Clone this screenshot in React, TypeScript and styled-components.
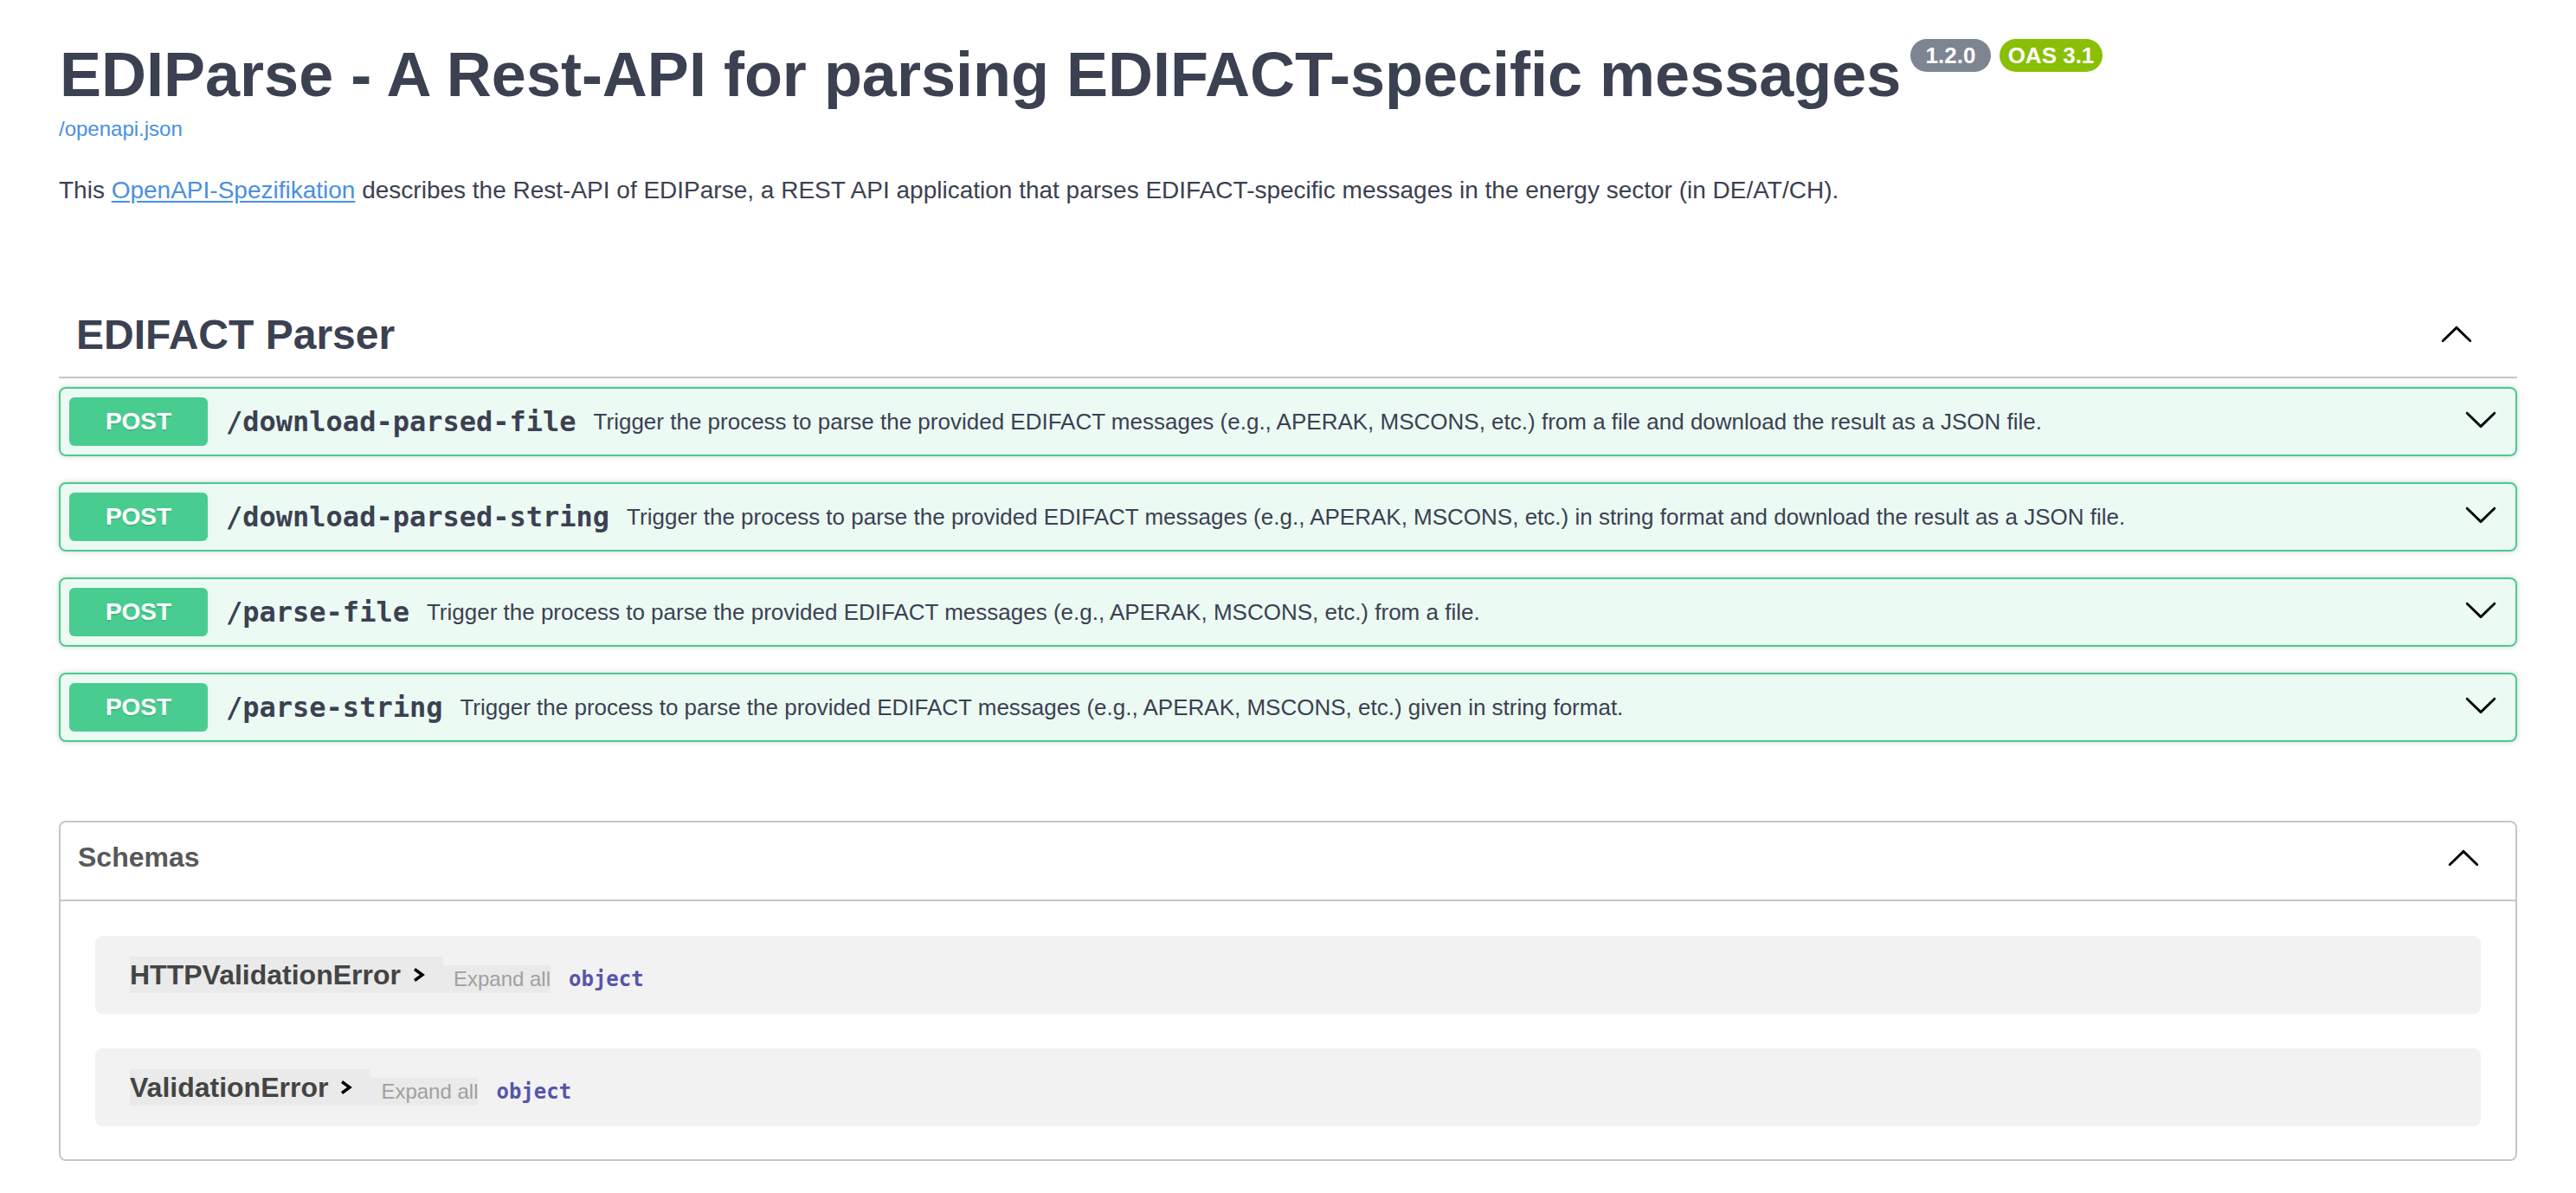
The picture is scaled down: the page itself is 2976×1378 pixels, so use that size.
import React from "react";
import styled, { createGlobalStyle } from "styled-components";

const GlobalStyle = createGlobalStyle`
  * { box-sizing: border-box; }
  body {
    margin: 0;
    background: #ffffff;
    font-family: "Liberation Sans", Arial, sans-serif;
    color: #3b4151;
  }
`;

const Wrapper = styled.div`
  max-width: 2920px;
  margin: 0 auto;
  padding: 45px 40px 36px;
`;

const Info = styled.header`
  margin-bottom: 97px;
`;

const Title = styled.h2`
  display: flex;
  align-items: flex-start;
  margin: 0;
  font-size: 72px;
  line-height: 82px;
  font-weight: 700;
  color: #3b4151;
`;

const TitleText = styled.span`
  padding-left: 1px;
`;

const Badges = styled.span`
  display: flex;
  gap: 10px;
  margin-left: 11px;
`;

const Badge = styled.span<{ $bg: string }>`
  display: inline-block;
  height: 38px;
  padding: 0 10px;
  border-radius: 100px;
  background: ${(p) => p.$bg};
  color: #ffffff;
  font-size: 26px;
  line-height: 39px;
  font-weight: 700;
  white-space: pre;
`;

const SpecLink = styled.a`
  display: block;
  margin-top: 8px;
  font-size: 24px;
  line-height: 28px;
  color: #4990e2;
  text-decoration: none;
`;

const Description = styled.p`
  margin: 36px 0 0;
  font-size: 28px;
  line-height: 42px;
  color: #3b4151;
`;

const DescLink = styled.a`
  color: #4990e2;
  text-decoration: underline;
  text-underline-offset: 3px;
`;

const TagSection = styled.section`
  display: flex;
  flex-direction: column;
`;

const TagHeader = styled.h3`
  display: flex;
  align-items: center;
  margin: 0 0 10px;
  padding: 20px 40px 20px 20px;
  border-bottom: 2px solid rgba(59, 65, 81, 0.3);
  font-size: 48px;
  font-weight: 700;
  color: #3b4151;
`;

const TagTitle = styled.span`
  flex: 1;
  line-height: 57px;
`;

const IconButton = styled.span<{ $pad?: string }>`
  display: flex;
  padding: ${(p) => p.$pad || "0"};
  color: #000000;
`;

const OpList = styled.div`
  display: flex;
  flex-direction: column;
  gap: 30px;
`;

const OpBlock = styled.div`
  display: flex;
  align-items: center;
  padding: 10px;
  border: 2px solid #49cc90;
  border-radius: 8px;
  background: rgba(73, 204, 144, 0.1);
  box-shadow: 0 0 6px rgba(0, 0, 0, 0.19);
`;

const Method = styled.span`
  min-width: 160px;
  padding: 12px 0;
  border-radius: 6px;
  background: #49cc90;
  color: #ffffff;
  font-size: 28px;
  line-height: 32px;
  font-weight: 700;
  text-align: center;
  text-shadow: 0 2px 0 rgba(0, 0, 0, 0.1);
`;

const Path = styled.span`
  padding: 0 20px 0 21px;
  font-family: "DejaVu Sans Mono", "Liberation Mono", monospace;
  font-size: 32px;
  font-weight: 700;
  color: #3b4151;
`;

const OpDesc = styled.span`
  flex: 1;
  font-size: 26px;
  color: #3b4151;
`;

const Models = styled.section`
  margin-top: 91px;
  border: 2px solid rgba(59, 65, 81, 0.3);
  border-radius: 8px;
`;

const ModelsHeader = styled.h4`
  display: flex;
  align-items: flex-start;
  margin: 0;
  padding: 22px 40px 27px 20px;
  border-bottom: 2px solid rgba(59, 65, 81, 0.3);
  font-size: 32px;
  font-weight: 700;
  color: #585858;
`;

const ModelsTitle = styled.span`
  flex: 1;
  line-height: 37px;
`;

const ModelList = styled.div`
  display: flex;
  flex-direction: column;
  gap: 40px;
  padding: 40px 40px 38px;
`;

const ModelRow = styled.div`
  display: flex;
  align-items: center;
  height: 90px;
  padding: 0 40px;
  border-radius: 8px;
  background: rgba(0, 0, 0, 0.05);
`;

const ModelLine = styled.div`
  display: flex;
  align-items: flex-end;
`;

const ModelToggle = styled.span`
  display: inline-flex;
  align-items: center;
  gap: 13px;
  height: 42px;
  padding-right: 20px;
  background: rgba(0, 0, 0, 0.03);
  font-size: 32px;
  line-height: 42px;
  font-weight: 700;
  color: #444444;
`;

const ToggleIcon = styled.svg`
  margin-top: 0;
`;

const ExpandAll = styled.span`
  display: inline-block;
  height: 32px;
  padding: 0 0 0 12px;
  background: rgba(0, 0, 0, 0.03);
  font-size: 24px;
  line-height: 32px;
  color: #a0a0a0;
`;

const PropType = styled.span`
  margin-left: 21px;
  font-family: "DejaVu Sans Mono", "Liberation Mono", monospace;
  font-size: 24px;
  line-height: 32px;
  font-weight: 700;
  color: #55a;
`;

const Chevron = ({ up }: { up?: boolean }) => (
  <svg width="40" height="40" viewBox="0 0 20 20" style={up ? { transform: "rotate(180deg)" } : undefined}>
    <path
      fill="currentColor"
      d="M17.418 6.109c.272-.268.709-.268.979 0s.271.701 0 .969l-7.908 7.83c-.27.268-.707.268-.979 0l-7.908-7.83c-.27-.268-.27-.701 0-.969.271-.268.709-.268.979 0L10 13.25l7.418-7.141z"
    />
  </svg>
);

const SmallChevron = () => (
  <ToggleIcon width="16" height="18" viewBox="0 0 16 18">
    <polyline points="3,2.5 12,9 3,15.5" fill="none" stroke="#000" strokeWidth="3.4" strokeLinejoin="miter" />
  </ToggleIcon>
);

const ops = [
  {
    path: "/download-parsed-file",
    desc: "Trigger the process to parse the provided EDIFACT messages (e.g., APERAK, MSCONS, etc.) from a file and download the result as a JSON file.",
  },
  {
    path: "/download-parsed-string",
    desc: "Trigger the process to parse the provided EDIFACT messages (e.g., APERAK, MSCONS, etc.) in string format and download the result as a JSON file.",
  },
  {
    path: "/parse-file",
    desc: "Trigger the process to parse the provided EDIFACT messages (e.g., APERAK, MSCONS, etc.) from a file.",
  },
  {
    path: "/parse-string",
    desc: "Trigger the process to parse the provided EDIFACT messages (e.g., APERAK, MSCONS, etc.) given in string format.",
  },
];

const schemas = ["HTTPValidationError", "ValidationError"];

export default function App() {
  return (
    <>
      <GlobalStyle />
      <Wrapper>
        <Info>
          <Title>
            <TitleText>EDIParse - A Rest-API for parsing EDIFACT-specific messages</TitleText>
            <Badges>
              <Badge $bg="#7d8492">{" 1.2.0 "}</Badge>
              <Badge $bg="#89bf04">OAS 3.1</Badge>
            </Badges>
          </Title>
          <SpecLink href="#">/openapi.json</SpecLink>
          <Description>
            This <DescLink href="#">OpenAPI-Spezifikation</DescLink> describes the Rest-API of EDIParse, a REST API
            application that parses EDIFACT-specific messages in the energy sector (in DE/AT/CH).
          </Description>
        </Info>

        <TagSection>
          <TagHeader>
            <TagTitle>EDIFACT Parser</TagTitle>
            <IconButton $pad="0 10px">
              <Chevron up />
            </IconButton>
          </TagHeader>
          <OpList>
            {ops.map((op) => (
              <OpBlock key={op.path}>
                <Method>POST</Method>
                <Path>{op.path}</Path>
                <OpDesc>{op.desc}</OpDesc>
                <IconButton $pad="0 10px 6px">
                  <Chevron />
                </IconButton>
              </OpBlock>
            ))}
          </OpList>
        </TagSection>

        <Models>
          <ModelsHeader>
            <ModelsTitle>Schemas</ModelsTitle>
            <IconButton>
              <Chevron up />
            </IconButton>
          </ModelsHeader>
          <ModelList>
            {schemas.map((s) => (
              <ModelRow key={s}>
                <ModelLine>
                  <ModelToggle>
                    {s}
                    <SmallChevron />
                  </ModelToggle>
                  <ExpandAll>Expand all</ExpandAll>
                  <PropType>object</PropType>
                </ModelLine>
              </ModelRow>
            ))}
          </ModelList>
        </Models>
      </Wrapper>
    </>
  );
}
